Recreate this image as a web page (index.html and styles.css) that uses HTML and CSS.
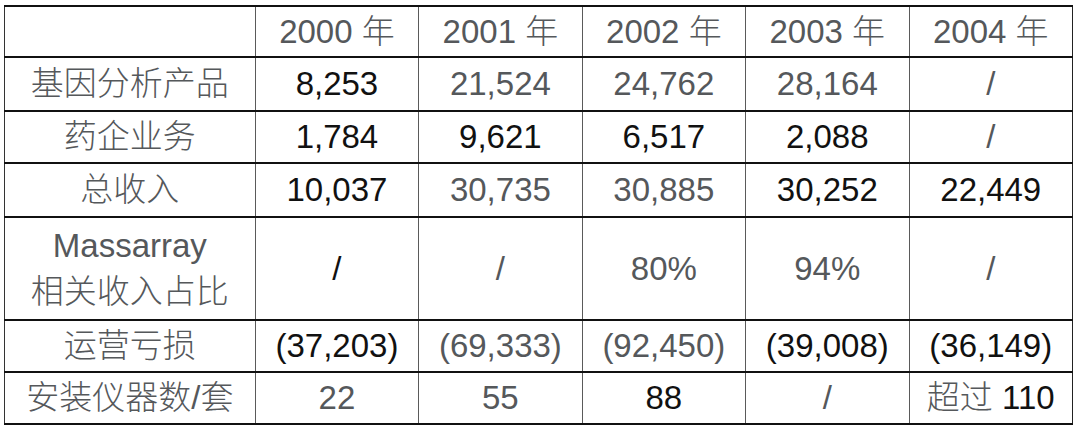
FILE: index.html
```html
<!DOCTYPE html>
<html lang="zh-CN">
<head>
<meta charset="utf-8">
<title>表</title>
<link rel="stylesheet" href="styles.css">
</head>
<body>
<div class="wrap">
<table class="data">
<colgroup>
<col class="c-label"><col class="c-y"><col class="c-y"><col class="c-y"><col class="c-y"><col class="c-y">
</colgroup>
<tr class="r-h">
<td class="g"></td><td class="g">2000 <span class="cjk">年</span></td><td class="g">2001 <span class="cjk">年</span></td><td class="g">2002 <span class="cjk">年</span></td><td class="g">2003 <span class="cjk">年</span></td><td class="g">2004 <span class="cjk">年</span></td>
</tr>
<tr class="r-2">
<td class="g cjk">基因分析产品</td><td class="k">8,253</td><td class="g">21,524</td><td class="g">24,762</td><td class="g">28,164</td><td class="g">/</td>
</tr>
<tr class="r-3">
<td class="g cjk">药企业务</td><td class="k">1,784</td><td class="k">9,621</td><td class="k">6,517</td><td class="k">2,088</td><td class="g">/</td>
</tr>
<tr class="r-4">
<td class="g cjk">总收入</td><td class="k">10,037</td><td class="g">30,735</td><td class="g">30,885</td><td class="k">30,252</td><td class="k">22,449</td>
</tr>
<tr class="r-5">
<td class="g two">Massarray<br><span class="cjk">相关收入占比</span></td><td class="k">/</td><td class="g">/</td><td class="g">80%</td><td class="g">94%</td><td class="g">/</td>
</tr>
<tr class="r-6">
<td class="g cjk">运营亏损</td><td class="k">(37,203)</td><td class="g">(69,333)</td><td class="g">(92,450)</td><td class="k">(39,008)</td><td class="k">(36,149)</td>
</tr>
<tr class="r-7 last">
<td class="g"><span class="cjk">安装仪器数</span>/<span class="cjk">套</span></td><td class="g">22</td><td class="g">55</td><td class="k">88</td><td class="g">/</td><td><span class="g cjk">超过</span> <span class="k">110</span></td>
</tr>
</table>
</div>
</body>
</html>
```
FILE: styles.css
```css
html, body {
  margin: 0;
  padding: 0;
  background: #ffffff;
}
.wrap {
  padding: 5px 0 0 4px;
}
.data {
  border-collapse: collapse;
  table-layout: fixed;
  width: 1069px;
  font-family: "Liberation Sans", Arial, "Noto Sans CJK SC", sans-serif;
  font-size: 33px;
}
.cjk {
  font-weight: 300;
}
.c-label { width: 250px; }
.c-y { width: 163px; }
.data td {
  padding: 0;
  text-align: center;
  vertical-align: middle;
  border-top: 2px solid #111111;
  border-left: 1px solid #5a5a5a;
  border-right: 1px solid #5a5a5a;
  line-height: 40px;
  white-space: nowrap;
}
.data td.two {
  line-height: 46px;
}
.data tr.last td {
  border-bottom: 2px solid #111111;
}
.data td:first-child { border-left-color: #333333; }
.data td:last-child { border-right-color: #222222; }
.g { color: #55585b; }
.k { color: #111111; }
.r-h td { height: 49px; }
.r-2 td { height: 52px; }
.r-3 td { height: 50px; }
.r-4 td { height: 52px; }
.r-5 td { height: 101px; }
.r-6 td { height: 50px; }
.r-7 td { height: 50px; }
```
